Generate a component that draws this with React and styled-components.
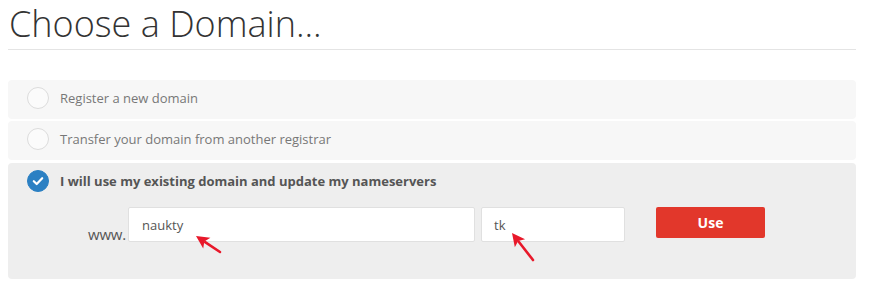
import React from "react";
import styled, { createGlobalStyle } from "styled-components";

const Global = createGlobalStyle`
  html, body { margin: 0; padding: 0; background: #fff; }
  body { font-family: "Open Sans", "Liberation Sans", sans-serif; }
`;

const Page = styled.div`
  width: 848px;
  padding-left: 8px;
  padding-top: 2px;
`;

const Title = styled.h1`
  margin: -3px 0 0;
  font-weight: 300;
  font-size: 36px;
  line-height: 49px;
  color: #333;
  padding-left: 1px;
  padding-bottom: 1px;
  border-bottom: 1px solid #e4e4e4;
`;

const List = styled.div`
  margin-top: 30px;
  display: flex;
  flex-direction: column;
  gap: 2px;
`;

const Row = styled.div`
  background: ${(p) => (p.$active ? "#eeeeee" : "#f7f7f7")};
  border-radius: 4px;
  padding-bottom: ${(p) => (p.$active ? "35px" : "0")};
  margin-top: ${(p) => (p.$active ? "1px" : "0")};
`;

const Head = styled.div`
  height: 35px;
  padding-bottom: 4px;
  display: flex;
  align-items: center;
  gap: 11px;
  padding-left: 19px;
`;

const Radio = styled.span`
  width: 22px;
  height: 22px;
  box-sizing: border-box;
  border-radius: 50%;
  border: 1px solid ${(p) => (p.$checked ? "#2b80c3" : "#dcdcdc")};
  background: ${(p) => (p.$checked ? "#2b80c3" : "#fbfbfb")};
  display: flex;
  align-items: center;
  justify-content: center;
  flex: none;
`;

const Label = styled.span`
  font-size: 13px;
  color: ${(p) => (p.$bold ? "#555" : "#777")};
  font-weight: ${(p) => (p.$bold ? 700 : 400)};
`;

const FormRow = styled.div`
  margin-top: 5px;
  display: flex;
  align-items: flex-start;
  padding-left: 80px;
  position: relative;
`;

const Www = styled.span`
  font-size: 15px;
  color: #555;
  margin-top: 17px;
  width: 40px;
  letter-spacing: -0.2px;
`;

const Input = styled.div`
  box-sizing: border-box;
  width: ${(p) => p.$w}px;
  height: 35px;
  background: #fff;
  border: 1px solid #e0e0e0;
  border-radius: 2px;
  padding-left: ${(p) => p.$pad}px;
  margin-right: ${(p) => p.$mr}px;
  display: flex;
  align-items: center;
  font-size: 13px;
  color: #555;
`;

const UseButton = styled.button`
  width: 109px;
  height: 31px;
  border: none;
  border-radius: 2px;
  background: #e2372b;
  color: #fff;
  font-family: "Open Sans", "Liberation Sans", sans-serif;
  font-weight: 700;
  font-size: 14px;
  padding: 0;
`;

const Arrow = styled.svg`
  position: absolute;
  overflow: visible;
  pointer-events: none;
`;

function RedArrow({ x1, y1, x2, y2, left, top }) {
  // tail (x1,y1) -> tip (x2,y2)
  const dx = x2 - x1, dy = y2 - y1;
  const len = Math.hypot(dx, dy);
  const ux = dx / len, uy = dy / len;
  const hl = 13, hw = 6.5;
  const bx = x2 - ux * hl, by = y2 - uy * hl;
  const px = -uy, py = ux;
  return (
    <Arrow width="40" height="40" style={{ left, top }}>
      <line x1={x1} y1={y1} x2={bx + ux * 2} y2={by + uy * 2} stroke="#e8182a" strokeWidth="2.6" strokeLinecap="round" />
      <polygon
        points={`${x2},${y2} ${bx + px * hw},${by + py * hw} ${bx + ux * 3},${by + uy * 3} ${bx - px * hw},${by - py * hw}`}
        fill="#e8182a"
      />
    </Arrow>
  );
}

export default function App() {
  return (
    <>
      <Global />
      <Page>
        <Title>Choose a Domain...</Title>
        <List>
          <Row>
            <Head>
              <Radio />
              <Label>Register a new domain</Label>
            </Head>
          </Row>
          <Row>
            <Head>
              <Radio />
              <Label>Transfer your domain from another registrar</Label>
            </Head>
          </Row>
          <Row $active>
            <Head>
              <Radio $checked>
                <svg width="12" height="10" viewBox="0 0 12 10">
                  <path d="M1.8 5.2 L4.7 8 L10.2 2.2" fill="none" stroke="#fff" strokeWidth="2.2" strokeLinecap="round" strokeLinejoin="round" />
                </svg>
              </Radio>
              <Label $bold>I will use my existing domain and update my nameservers</Label>
            </Head>
            <FormRow>
              <Www>www.</Www>
              <Input $w={347} $pad={13} $mr={6}>naukty</Input>
              <Input $w={144} $pad={12} $mr={31}>tk</Input>
              <UseButton>Use</UseButton>
              <RedArrow left={180} top={22} x1={32} y1={23} x2={8} y2={7} />
              <RedArrow left={500} top={22} x1={25} y1={31} x2={4} y2={4} />
            </FormRow>
          </Row>
        </List>
      </Page>
    </>
  );
}
